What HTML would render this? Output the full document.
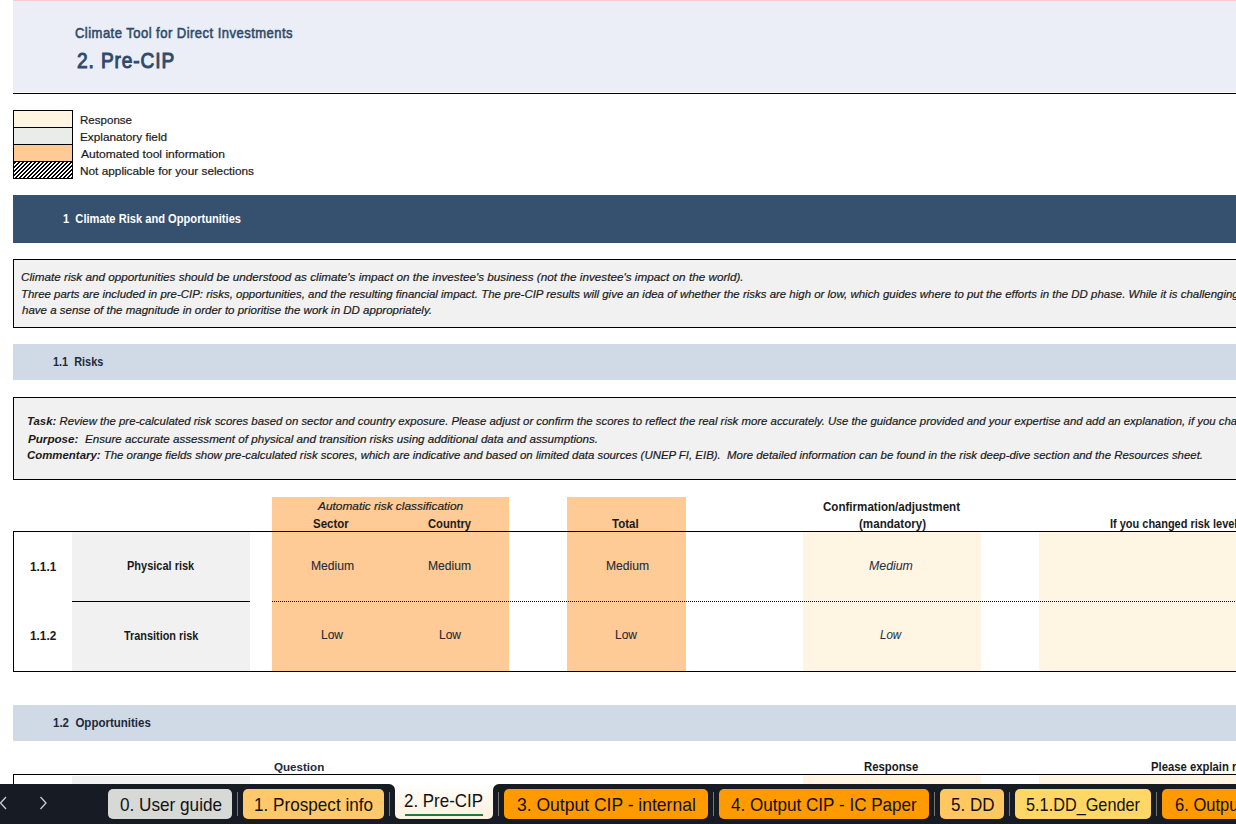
<!DOCTYPE html><html><head><meta charset="utf-8"><style>
html,body{margin:0;padding:0;width:1236px;height:824px;overflow:hidden;background:#fff;position:relative;font-family:"Liberation Sans", sans-serif}
.t{position:absolute;white-space:pre;line-height:20px;height:20px;transform-origin:0 0}
.r{-webkit-text-stroke:0.2px currentColor}.r b{-webkit-text-stroke:0}
</style></head><body>
<div style="position:absolute;left:13px;top:0px;width:1223px;height:1px;background:#fdc9c9"></div>
<div style="position:absolute;left:13px;top:1px;width:1223px;height:91px;background:#ebeef6"></div>
<div style="position:absolute;left:13px;top:93px;width:1223px;height:1px;background:#000"></div>
<div style="position:absolute;left:13px;top:110px;width:60px;height:18px;box-sizing:border-box;border:1px solid #000;background:#fff5e1"></div>
<div style="position:absolute;left:13px;top:127px;width:60px;height:18px;box-sizing:border-box;border:1px solid #000;background:#e9ece9"></div>
<div style="position:absolute;left:13px;top:144px;width:60px;height:18px;box-sizing:border-box;border:1px solid #000;background:#fecb97"></div>
<div style="position:absolute;left:13px;top:161px;width:60px;height:18px;box-sizing:border-box;border:1px solid #000;background:repeating-linear-gradient(135deg,#000 0,#000 1.6px,#fff 1.6px,#fff 2.83px)"></div>
<div style="position:absolute;left:13px;top:195px;width:1223px;height:48px;background:#36506f"></div>
<div style="position:absolute;left:13px;top:259px;width:1236px;height:69px;box-sizing:border-box;border:1px solid #000;background:#f1f1f1"></div>
<div style="position:absolute;left:13px;top:344px;width:1223px;height:36px;background:#d0dae7"></div>
<div style="position:absolute;left:13px;top:397px;width:1236px;height:83px;box-sizing:border-box;border:1px solid #000;background:#f1f1f1"></div>
<div style="position:absolute;left:272px;top:497px;width:237px;height:174px;background:#fecb97"></div>
<div style="position:absolute;left:567px;top:497px;width:119px;height:174px;background:#fecb97"></div>
<div style="position:absolute;left:803px;top:532px;width:178px;height:139px;background:#fff5e2"></div>
<div style="position:absolute;left:1039px;top:532px;width:197px;height:139px;background:#fff5e2"></div>
<div style="position:absolute;left:72px;top:532px;width:178px;height:139px;background:#f1f1f1"></div>
<div style="position:absolute;left:13px;top:531px;width:1223px;height:1px;background:#000"></div>
<div style="position:absolute;left:13px;top:531px;width:1px;height:141px;background:#000"></div>
<div style="position:absolute;left:13px;top:671px;width:1223px;height:1px;background:#000"></div>
<div style="position:absolute;left:72px;top:601px;width:178px;height:1px;background:#000"></div>
<div style="position:absolute;left:272px;top:601px;width:964px;height:1px;background:repeating-linear-gradient(90deg,#000 0,#000 1px,transparent 1px,transparent 2px)"></div>
<div style="position:absolute;left:13px;top:705px;width:1223px;height:36px;background:#d0dae7"></div>
<div style="position:absolute;left:13px;top:774px;width:1223px;height:1px;background:#000"></div>
<div style="position:absolute;left:13px;top:774px;width:1px;height:12px;background:#000"></div>
<div style="position:absolute;left:72px;top:776px;width:178px;height:10px;background:#f1f1f1"></div>
<div style="position:absolute;left:803px;top:775px;width:178px;height:10px;background:#fff5e2"></div>
<div style="position:absolute;left:1039px;top:775px;width:197px;height:10px;background:#fff5e2"></div>
<div style="position:absolute;left:0px;top:790px;width:1236px;height:34px;background:#171c24"></div>
<div style="position:absolute;left:0px;top:784px;width:395px;height:40px;background:#171c24;border-top-right-radius:6px"></div>
<div style="position:absolute;left:493px;top:784px;width:743px;height:40px;background:#171c24;border-top-left-radius:6px"></div>
<div style="position:absolute;left:395px;top:784px;width:98px;height:35px;background:linear-gradient(#ffffff 0%,#fef8ee 40%,#fdf0df 100%);border-bottom-left-radius:5px;border-bottom-right-radius:5px"></div>
<div style="position:absolute;left:405px;top:813.5px;width:78px;height:2px;background:#1e7b3a"></div>
<div style="position:absolute;left:108px;top:789px;width:124px;height:30px;background:#d7d9d6;border-radius:5px"></div>
<div style="position:absolute;left:243px;top:789px;width:141px;height:30px;background:#ffc96b;border-radius:5px"></div>
<div style="position:absolute;left:504px;top:789px;width:204px;height:30px;background:#ff9a00;border-radius:5px"></div>
<div style="position:absolute;left:719px;top:789px;width:210px;height:30px;background:#ff9a00;border-radius:5px"></div>
<div style="position:absolute;left:940px;top:789px;width:64px;height:30px;background:#ffc760;border-radius:5px"></div>
<div style="position:absolute;left:1015px;top:789px;width:136px;height:30px;background:#ffd766;border-radius:5px"></div>
<div style="position:absolute;left:1162px;top:789px;width:238px;height:30px;background:#ff9a00;border-radius:5px"></div>
<div style="position:absolute;left:237px;top:792px;width:1px;height:24px;background:#78746f"></div>
<div style="position:absolute;left:389px;top:792px;width:1px;height:24px;background:#78746f"></div>
<div style="position:absolute;left:498px;top:792px;width:1px;height:24px;background:#78746f"></div>
<div style="position:absolute;left:713px;top:792px;width:1px;height:24px;background:#78746f"></div>
<div style="position:absolute;left:934px;top:792px;width:1px;height:24px;background:#78746f"></div>
<div style="position:absolute;left:1009px;top:792px;width:1px;height:24px;background:#78746f"></div>
<div style="position:absolute;left:1156px;top:792px;width:1px;height:24px;background:#78746f"></div>
<svg style="position:absolute;left:0;top:795px" width="60" height="16"><polyline points="6,2 0.5,8 6,14" fill="none" stroke="#c9ccd1" stroke-width="1.3"/><polyline points="40.5,2 46,8 40.5,14" fill="none" stroke="#c9ccd1" stroke-width="1.3"/></svg>
<div class="t r" style="left:75.20px;top:23.11px;font-size:14.1px;color:#2e4a6b;transform:scaleX(0.9247);-webkit-text-stroke:0.55px currentColor;letter-spacing:0.5px;">Climate Tool for Direct Investments</div>
<div class="t r" style="left:77.20px;top:51.45px;font-size:21.8px;color:#2e4a6b;transform:scaleX(0.8776);-webkit-text-stroke:1px currentColor;letter-spacing:1px;">2. Pre-CIP</div>
<div class="t r" style="left:80.30px;top:109.71px;font-size:11.8px;color:#1a1a1a;transform:scaleX(0.9792);">Response</div>
<div class="t r" style="left:80.30px;top:126.71px;font-size:11.8px;color:#1a1a1a;transform:scaleX(0.9980);">Explanatory field</div>
<div class="t r" style="left:81.10px;top:143.71px;font-size:11.8px;color:#1a1a1a;transform:scaleX(1.0213);">Automated tool information</div>
<div class="t r" style="left:80.30px;top:160.71px;font-size:11.8px;color:#1a1a1a;transform:scaleX(1.0014);">Not applicable for your selections</div>
<div class="t" style="left:63.20px;top:208.63px;font-size:12.6px;font-weight:700;color:#ffffff;transform:scaleX(0.8833);">1  Climate Risk and Opportunities</div>
<div class="t r" style="left:21.20px;top:266.71px;font-size:11.8px;font-style:italic;color:#1a1a1a;transform:scaleX(0.9934);">Climate risk and opportunities should be understood as climate's impact on the investee's business (not the investee's impact on the world).</div>
<div class="t r" style="left:21.20px;top:283.61px;font-size:11.8px;font-style:italic;color:#1a1a1a;transform:scaleX(0.9706);">Three parts are included in pre-CIP: risks, opportunities, and the resulting financial impact. The pre-CIP results will give an idea of whether the risks are high or low, which guides where to put the efforts in the DD phase. While it is challenging, it is important to</div>
<div class="t r" style="left:22.00px;top:300.41px;font-size:11.8px;font-style:italic;color:#1a1a1a;transform:scaleX(0.9760);">have a sense of the magnitude in order to prioritise the work in DD appropriately.</div>
<div class="t" style="left:53.20px;top:352.27px;font-size:12.2px;font-weight:700;color:#1c2a3a;transform:scaleX(0.8935);">1.1  Risks</div>
<div class="t r" style="left:27.30px;top:411.41px;font-size:11.8px;font-style:italic;color:#1a1a1a;transform:scaleX(0.9657);"><b>Task:</b> Review the pre-calculated risk scores based on sector and country exposure. Please adjust or confirm the scores to reflect the real risk more accurately. Use the guidance provided and your expertise and add an explanation, if you change the</div>
<div class="t r" style="left:28.10px;top:428.51px;font-size:11.8px;font-style:italic;color:#1a1a1a;transform:scaleX(0.9867);"><b>Purpose:</b>&nbsp; Ensure accurate assessment of physical and transition risks using additional data and assumptions.</div>
<div class="t r" style="left:27.30px;top:445.31px;font-size:11.8px;font-style:italic;color:#1a1a1a;transform:scaleX(0.9677);"><b>Commentary:</b> The orange fields show pre-calculated risk scores, which are indicative and based on limited data sources (UNEP FI, EIB).&nbsp; More detailed information can be found in the risk deep-dive section and the Resources sheet.</div>
<div class="t r" style="left:317.64px;top:496.41px;font-size:11.8px;font-style:italic;color:#222;transform:scaleX(1.0067);">Automatic risk classification</div>
<div class="t" style="left:312.67px;top:514.14px;font-size:12px;font-weight:700;color:#1a1a1a;transform:scaleX(0.9599);">Sector</div>
<div class="t" style="left:427.51px;top:514.14px;font-size:12px;font-weight:700;color:#1a1a1a;transform:scaleX(0.9361);">Country</div>
<div class="t" style="left:612.31px;top:514.14px;font-size:12px;font-weight:700;color:#1a1a1a;transform:scaleX(0.9584);">Total</div>
<div class="t" style="left:823.09px;top:497.34px;font-size:12px;font-weight:700;color:#1a1a1a;transform:scaleX(0.9648);">Confirmation/adjustment</div>
<div class="t" style="left:858.97px;top:514.14px;font-size:12px;font-weight:700;color:#1a1a1a;transform:scaleX(0.9671);">(mandatory)</div>
<div class="t" style="left:1109.64px;top:514.14px;font-size:12px;font-weight:700;color:#1a1a1a;transform:scaleX(0.9140);">If you changed risk level, please explain</div>
<div class="t" style="left:30.20px;top:556.84px;font-size:12px;font-weight:700;color:#1a1a1a;transform:scaleX(0.9835);">1.1.1</div>
<div class="t" style="left:30.20px;top:625.84px;font-size:12px;font-weight:700;color:#1a1a1a;transform:scaleX(0.9835);">1.1.2</div>
<div class="t" style="left:127.38px;top:555.84px;font-size:12px;font-weight:700;color:#1a1a1a;transform:scaleX(0.9162);">Physical risk</div>
<div class="t" style="left:124.14px;top:625.84px;font-size:12px;font-weight:700;color:#1a1a1a;transform:scaleX(0.9070);">Transition risk</div>
<div class="t r" style="left:310.69px;top:555.54px;font-size:12px;color:#262a36;transform:scaleX(1.0116);-webkit-text-stroke:0.1px currentColor;">Medium</div>
<div class="t r" style="left:320.85px;top:625.44px;font-size:12px;color:#262a36;transform:scaleX(1.0016);-webkit-text-stroke:0.1px currentColor;">Low</div>
<div class="t r" style="left:428.35px;top:555.54px;font-size:12px;color:#262a36;transform:scaleX(1.0116);-webkit-text-stroke:0.1px currentColor;">Medium</div>
<div class="t r" style="left:438.52px;top:625.44px;font-size:12px;color:#262a36;transform:scaleX(1.0016);-webkit-text-stroke:0.1px currentColor;">Low</div>
<div class="t r" style="left:606.03px;top:555.54px;font-size:12px;color:#262a36;transform:scaleX(1.0116);-webkit-text-stroke:0.1px currentColor;">Medium</div>
<div class="t r" style="left:615.39px;top:625.44px;font-size:12px;color:#262a36;transform:scaleX(1.0016);-webkit-text-stroke:0.1px currentColor;">Low</div>
<div class="t r" style="left:869.33px;top:555.54px;font-size:12px;font-style:italic;color:#263142;transform:scaleX(1.0284);-webkit-text-stroke:0.05px currentColor;">Medium</div>
<div class="t r" style="left:880.39px;top:625.44px;font-size:12px;font-style:italic;color:#263142;transform:scaleX(0.9637);-webkit-text-stroke:0.05px currentColor;">Low</div>
<div class="t" style="left:52.64px;top:712.77px;font-size:12.2px;font-weight:700;color:#1c2a3a;transform:scaleX(0.9443);">1.2  Opportunities</div>
<div class="t" style="left:274.47px;top:756.72px;font-size:11.5px;font-weight:700;color:#1c2a3a;transform:scaleX(1.0083);">Question</div>
<div class="t" style="left:864.25px;top:756.54px;font-size:12px;font-weight:700;color:#1a1a1a;transform:scaleX(0.9459);">Response</div>
<div class="t" style="left:1150.76px;top:756.54px;font-size:12px;font-weight:700;color:#1a1a1a;transform:scaleX(0.9417);">Please explain reasoning</div>
<div class="t r" style="left:119.64px;top:795.13px;font-size:17.8px;color:#111;transform:scaleX(0.9648);-webkit-text-stroke:0;">0. User guide</div>
<div class="t r" style="left:253.86px;top:795.13px;font-size:17.8px;color:#111;transform:scaleX(0.9634);-webkit-text-stroke:0;">1. Prospect info</div>
<div class="t r" style="left:516.52px;top:795.13px;font-size:17.8px;color:#111;transform:scaleX(0.9851);-webkit-text-stroke:0;">3. Output CIP - internal</div>
<div class="t r" style="left:730.86px;top:795.13px;font-size:17.8px;color:#111;transform:scaleX(0.9608);-webkit-text-stroke:0;">4. Output CIP - IC Paper</div>
<div class="t r" style="left:950.98px;top:795.13px;font-size:17.8px;color:#111;transform:scaleX(0.9566);-webkit-text-stroke:0;">5. DD</div>
<div class="t r" style="left:1025.52px;top:795.13px;font-size:17.8px;color:#111;transform:scaleX(0.9154);-webkit-text-stroke:0;">5.1.DD_Gender</div>
<div class="t r" style="left:1174.98px;top:795.13px;font-size:17.8px;color:#111;transform:scaleX(0.9300);-webkit-text-stroke:0;">6. Output</div>
<div class="t r" style="left:404.30px;top:790.63px;font-size:17.8px;color:#111;transform:scaleX(0.9523);-webkit-text-stroke:0;">2. Pre-CIP</div>
</body></html>
